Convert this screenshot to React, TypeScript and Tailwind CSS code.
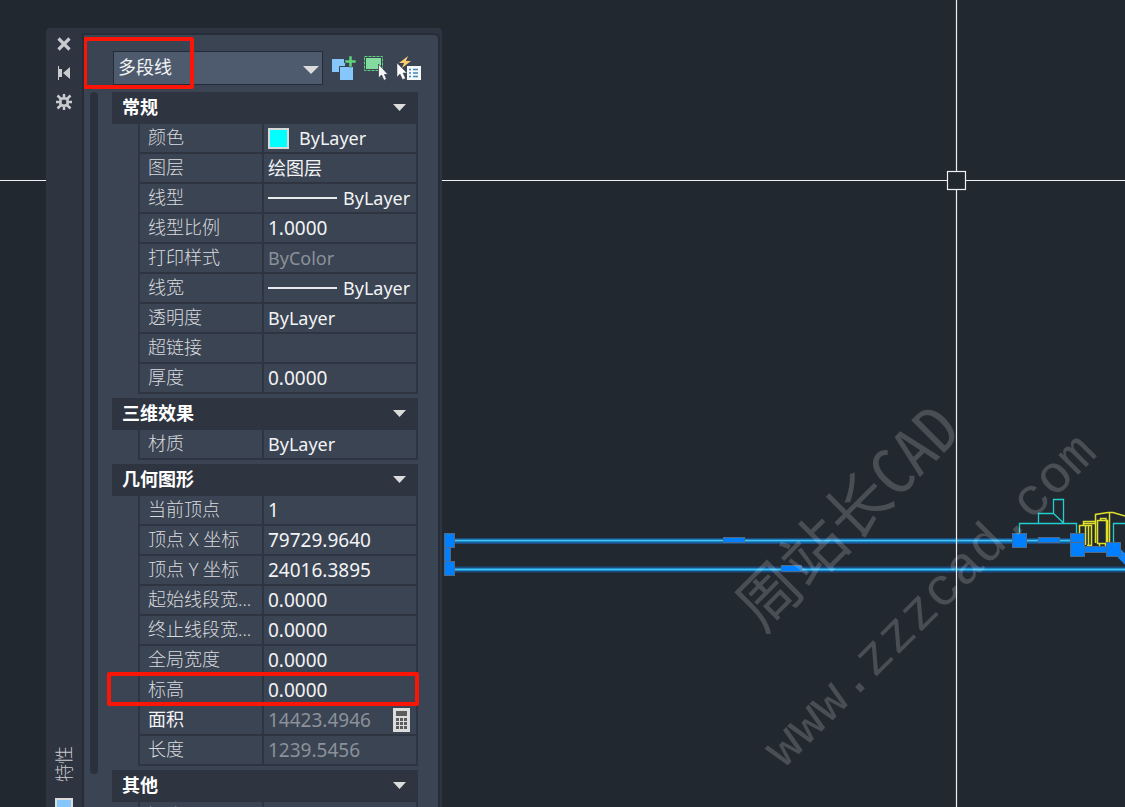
import type { ReactNode } from "react";

type Row = {
  label: string;
  value?: string;
  kind?: "swatch" | "line" | "number" | "calc";
  muted?: boolean;
  active?: boolean;
  marked?: boolean;
};

const sections: { title: string; rows: Row[] }[] = [
  {
    title: "常规",
    rows: [
      { label: "颜色", value: "ByLayer", kind: "swatch" },
      { label: "图层", value: "绘图层" },
      { label: "线型", value: "ByLayer", kind: "line" },
      { label: "线型比例", value: "1.0000", kind: "number" },
      { label: "打印样式", value: "ByColor", muted: true },
      { label: "线宽", value: "ByLayer", kind: "line" },
      { label: "透明度", value: "ByLayer" },
      { label: "超链接" },
      { label: "厚度", value: "0.0000", kind: "number" },
    ],
  },
  {
    title: "三维效果",
    rows: [{ label: "材质", value: "ByLayer" }],
  },
  {
    title: "几何图形",
    rows: [
      { label: "当前顶点", value: "1", kind: "number" },
      { label: "顶点 X 坐标", value: "79729.9640", kind: "number" },
      { label: "顶点 Y 坐标", value: "24016.3895", kind: "number" },
      { label: "起始线段宽...", value: "0.0000", kind: "number" },
      { label: "终止线段宽...", value: "0.0000", kind: "number" },
      { label: "全局宽度", value: "0.0000", kind: "number" },
      { label: "标高", value: "0.0000", kind: "number", marked: true },
      { label: "面积", value: "14423.4946", kind: "calc", muted: true, active: true },
      { label: "长度", value: "1239.5456", kind: "number", muted: true },
    ],
  },
  {
    title: "其他",
    rows: [{ label: "闭合" }],
  },
];

function Calculator() {
  return (
    <svg width="17" height="24" viewBox="0 0 17 24" shapeRendering="crispEdges">
      <path fill="#dcdcdc" d="M0 0h17v24H0z" />
      <path
        fill="#5c5c5c"
        d="M3 3h11v5H3zM3 10h3v3H3zM7 10h3v3H7zM11 10h3v3h-3zM3 14h3v3H3zM7 14h3v3H7zM11 14h3v3h-3zM3 18h3v3H3zM7 18h3v3H7zM11 18h3v3h-3z"
      />
    </svg>
  );
}

function PropertyRow({ row }: { row: Row }) {
  const isNumber = row.kind === "number" || row.kind === "calc";

  return (
    <tr className="relative h-[30px]">
      <th
        scope="row"
        className={`w-[124px] border-b-2 border-l-2 border-[#2e3440] p-0 pb-0.5 pl-2 text-left text-lg leading-[26px] whitespace-nowrap ${
          row.active ? "font-normal text-[#f2f3f4]" : "font-light text-[#d8dade]"
        }`}
      >
        {row.label}
        {row.marked && (
          <span className="absolute -top-1 -right-px bottom-0 -left-[31px] rounded-xs border-4 border-[#fb1507]" />
        )}
      </th>
      <td
        className={`w-[156px] border-x-2 border-b-2 border-[#2e3440] p-0 pl-1 leading-7 ${
          isNumber ? "text-[19px]" : "text-lg"
        } ${row.muted ? "text-[#8b9199]" : "text-[#f2f3f4]"}`}
      >
        <div className="flex h-7 items-center">
          {row.kind === "swatch" && (
            <span className="mr-2.5 h-[21px] w-[21px] border-2 border-[#d8d8d8] bg-[#00ffff]" />
          )}
          {row.kind === "line" && <span className="mr-1.5 h-0.5 w-[69px] bg-[#e8e9eb]" />}
          <span>{row.value}</span>
          {row.kind === "calc" && (
            <button type="button" aria-label="快速计算器" className="mr-1.5 ml-auto">
              <Calculator />
            </button>
          )}
        </div>
      </td>
    </tr>
  );
}

function Section({ title, rows }: { title: string; rows: Row[] }) {
  return (
    <section>
      <button
        type="button"
        className="flex h-8 w-full items-center justify-between bg-[#2e3440] pr-3 pb-0.5 pl-[10px] text-lg font-bold text-white"
      >
        {title}
        <svg width="13" height="7" viewBox="0 0 13 7">
          <path fill="#dcdcdc" d="M0 0h13L6.500 7z" />
        </svg>
      </button>
      <table className="ml-[26px] w-[280px] table-fixed border-separate border-spacing-0">
        <tbody>
          {rows.map((row) => (
            <PropertyRow key={row.label} row={row} />
          ))}
        </tbody>
      </table>
    </section>
  );
}

function ToolButton({ label, children }: { label: string; children: ReactNode }) {
  return (
    <button type="button" aria-label={label} className="h-6 w-6">
      <svg width="24" height="24" viewBox="0 0 24 24" className="overflow-visible">
        {children}
      </svg>
    </button>
  );
}

function Toolbar() {
  return (
    <div className="relative flex items-center gap-2 pl-[29px]">
      <div className="relative mr-px">
        <select
          aria-label="对象类型"
          className="block h-[34px] w-[210px] appearance-none border border-[#252b36] bg-[#4e5a6d] pb-0.5 pl-1 text-lg text-[#f2f3f4]"
        >
          <option>多段线</option>
        </select>
        <svg width="16" height="8" viewBox="0 0 16 8" className="pointer-events-none absolute top-[15px] right-1">
          <path fill="#dcdcdc" d="M0 0h16L8 8z" />
        </svg>
      </div>
      <ToolButton label="切换 PICKADD">
        <path fill="#85c7fb" d="M0 3h12v4h1v3H8v6H0z" />
        <path fill="#85c7fb" stroke="#3b4453" d="M7.500 10.500h14v14h-14z" />
        <path fill="#5fd27c" stroke="#3b4453" strokeWidth="0.500" d="M17 0h3v4h4v3h-4v4h-3V7h-4V4h4z" />
      </ToolButton>
      <ToolButton label="选择对象">
        <rect x="0.500" y="0.500" width="18" height="14" fill="none" stroke="#5fd27c" strokeDasharray="3 1" />
        <path fill="#83dba0" d="M2 2h15v11H2z" />
        <path fill="#f4f4f4" stroke="#3b4453" strokeWidth="0.800" d="M14.500 8v14l3-3 2.500 5.500 2.500-1.500-2-4.500h3.500z" />
      </ToolButton>
      <ToolButton label="快速选择">
        <path fill="#f8cb71" d="M12 0L3 7h5l-2 5 9-7h-5z" />
        <path fill="#fff" stroke="#3b4453" strokeWidth="0.500" d="M1 7v14l3-3 2.500 5.500 3-1-2.500-5.500h4z" />
        <path fill="#f4f6f8" d="M11 10h14v14H11z" />
        <path stroke="#3f86b8" strokeWidth="1.500" d="M13 13.500h2M17 13.500h5M13 17h2M17 17h5M13 20.500h2M17 20.500h5" />
      </ToolButton>
      <span className="pointer-events-none absolute -top-3.5 -left-px h-[52px] w-[111px] rounded-xs border-4 border-[#fb1507]" />
    </div>
  );
}

function Palette() {
  return (
    <aside className="relative mt-7 ml-[46px] flex w-[396px] rounded-t bg-[#2e3440] pt-[5px] pr-0.5">
      <div className="flex w-9 flex-col items-center text-[#c9cbcf]">
        <button type="button" aria-label="关闭" className="mt-1">
          <svg width="14" height="14" viewBox="0 0 14 14">
            <path stroke="currentColor" strokeWidth="3.200" d="M1.500 1.500l11 11M12.500 1.500l-11 11" />
          </svg>
        </button>
        <button type="button" aria-label="自动隐藏" className="mt-[15px]">
          <svg width="14" height="14" viewBox="0 0 14 14" fill="currentColor">
            <path d="M1 0h1v14H1zM2 3h3v8H2zM6 7l7-6v12z" />
          </svg>
        </button>
        <button type="button" aria-label="设置" className="mt-3.5">
          <svg width="16" height="16" viewBox="0 0 16 16" fill="none" stroke="currentColor">
            <path strokeWidth="2.500" d="M6 4.500h4L11.500 6v4L10 11.500H6L4.500 10V6z" />
            <path strokeWidth="2.500" d="M8 0v4M8 12v4M0 8h4M12 8h4M1.500 1.500l3.500 3.500M11 11l3.500 3.500M14.500 1.500L11 5M5 11l-3.500 3.500" />
          </svg>
        </button>
        <span className="mt-auto mb-4 rotate-180 text-lg leading-5 font-light [text-orientation:sideways] [writing-mode:vertical-rl]">
          特性
        </span>
        <span className="h-[9px] w-[18px] border-2 border-b-0 border-[#dcdcdc] bg-[#85c7fb]" />
      </div>
      <div className="min-w-0 flex-1 overflow-hidden rounded-tr-md border-2 border-b-0 border-[#272d38] bg-[#3b4453] pt-4">
        <Toolbar />
        <div className="mt-[7px] flex h-[calc(100%-41px)] pl-1.5">
          <div className="mb-[33px] w-2 rounded-full bg-[#2b313c]" />
          <div className="ml-3.5 flex w-[306px] flex-col gap-1">
            {sections.map((s) => (
              <Section key={s.title} {...s} />
            ))}
          </div>
        </div>
      </div>
    </aside>
  );
}

// The drawing: a selected polyline with its grips, plus the crosshair cursor.
function Drawing() {
  return (
    <svg className="absolute inset-0 h-full w-full">
      <path fill="none" stroke="#1d4a80" strokeWidth="6" d="M450 541H1080M450 569.500H2600" />
      <path fill="none" stroke="#1579b8" strokeWidth="3" d="M450 541H1080M450 569.500H2600" />
      <path fill="none" stroke="#3fc6f2" strokeWidth="1.500" d="M450 540.500H1080M450 569.500H2600" />
      <path
        fill="none"
        stroke="#22cdd0"
        strokeWidth="1.300"
        d="M1019.500 541V523.500H1076.500V541M1038.500 523V513.500H1053.500V499.500H1063.500V523M1053.500 513.500L1063.500 523M1113.500 545V523.500H1125"
      />
      <path
        fill="none"
        stroke="#dfe02a"
        strokeWidth="1.500"
        d="M1079.500 540V525.500H1091.500V545.500H1087M1085.500 525V545M1088.500 525V545M1083.500 525V521.500H1095M1095.500 543V514.500L1108 512.500H1113L1125 516M1109.500 513V545M1106.500 520V543M1097.500 520.500H1107.500V543.500H1097.500zM1100.500 520V518.500H1106V520M1084 523.500H1095M1099.500 544V547M1105.500 544V547"
      />
      <path stroke="#0a84ff" strokeWidth="8" d="M1116 550l20 20" />
      <g fill="#0080ff" stroke="#516a86">
        <rect x="444.500" y="546.500" width="6" height="16" />
        <rect x="444.500" y="533.500" width="10" height="14" />
        <rect x="444.500" y="561.500" width="10" height="14" />
        <rect x="723.500" y="537.500" width="21" height="5" />
        <rect x="781.500" y="565.500" width="20" height="6" />
        <rect x="1012.500" y="533.500" width="14" height="14" />
        <rect x="1038.500" y="537.500" width="21" height="5" />
        <rect x="1084.500" y="546.500" width="22" height="6" />
        <rect x="1070.500" y="533.500" width="14" height="14" />
        <rect x="1070.500" y="542.500" width="14" height="14" />
        <rect x="1106.500" y="542.500" width="14" height="14" />
      </g>
      <g fill="#fff" fillOpacity="0.180">
        <text
          transform="translate(763 634) rotate(-45)"
          className="font-['Noto_Sans_Mono_CJK_SC','Liberation_Mono','Noto_Sans_CJK_SC',monospace] text-[63px] font-medium"
        >
          周站长CAD
        </text>
        <text
          transform="translate(784 769) rotate(-45)"
          className="font-['Liberation_Mono',monospace] text-[53px]"
        >
          www.zzzcad.com
        </text>
      </g>
      <g fill="none" stroke="#f0f0f4" strokeWidth="1.200">
        <path d="M956.500 0V171M956.500 190V2000M0 180.500H947M966 180.500H2600" />
        <rect x="947.500" y="171.500" width="18" height="18" />
      </g>
    </svg>
  );
}

export default function App() {
  return (
    <main className="relative flex h-screen overflow-hidden bg-[#222830] font-['Noto_Sans','Noto_Sans_CJK_SC',sans-serif]">
      <Drawing />
      <Palette />
    </main>
  );
}
